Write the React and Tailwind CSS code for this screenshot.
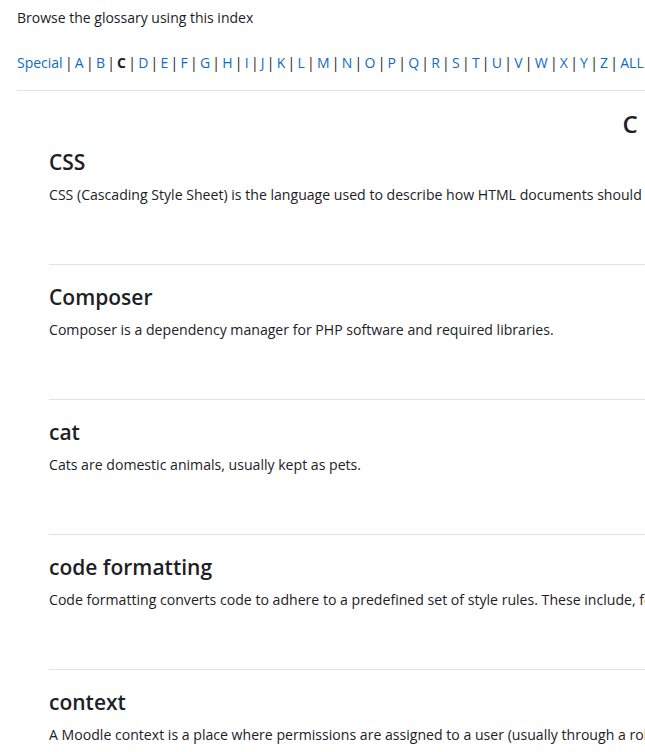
const LETTERS = "ABCDEFGHIJKLMNOPQRSTUVWXYZ".split("");

const ENTRIES = [
  {
    term: "CSS",
    def: "CSS (Cascading Style Sheet) is the language used to describe how HTML documents should be formatted and displayed in a browser.",
  },
  {
    term: "Composer",
    def: "Composer is a dependency manager for PHP software and required libraries.",
  },
  {
    term: "cat",
    def: "Cats are domestic animals, usually kept as pets.",
  },
  {
    term: "code formatting",
    def: "Code formatting converts code to adhere to a predefined set of style rules. These include, for example, indentation, spacing and line length.",
  },
  {
    term: "context",
    def: "A Moodle context is a place where permissions are assigned to a user (usually through a role assignment), for example a course or an activity.",
  },
];

export default function App() {
  return (
    <div className="w-full h-screen overflow-hidden bg-white text-[#1d2125] font-['Open_Sans',sans-serif]">
      <div className="ml-[17px] w-[1226px] pt-[8px]">
        <p className="text-[14px] leading-[20px]">Browse the glossary using this index</p>

        {/* letter index */}
        <div className="mt-[25px] text-[14px] leading-[20px] whitespace-nowrap [word-spacing:-1.4px]">
          <a href="#" className="text-[#0f6cbf]">Special</a>
          {LETTERS.map((l) => (
            <span key={l}>
              {" | "}
              {l === "C" ? (
                <b className="font-bold">C</b>
              ) : (
                <a href="#" className="text-[#0f6cbf]">{l}</a>
              )}
            </span>
          ))}
          {" | "}
          <a href="#" className="text-[#0f6cbf]">ALL</a>
        </div>

        <div className="mt-[17px] border-t border-[#dee2e6]" />

        <h2 className="mt-[17px] text-center text-[24px] leading-[32px] font-semibold">C</h2>

        <div className="ml-[32px] divide-y divide-[#dee2e6]">
          {ENTRIES.map((e, i) => (
            <div key={e.term} className={i === 0 ? "pt-[8px] pb-[59px]" : "pt-[18px] pb-[59px]"}>
              <h3 className="text-[21px] leading-[28px] font-semibold">{e.term}</h3>
              <p className="mt-[9px] text-[14.1px] leading-[20px] whitespace-nowrap">{e.def}</p>
            </div>
          ))}
        </div>
      </div>
    </div>
  );
}
